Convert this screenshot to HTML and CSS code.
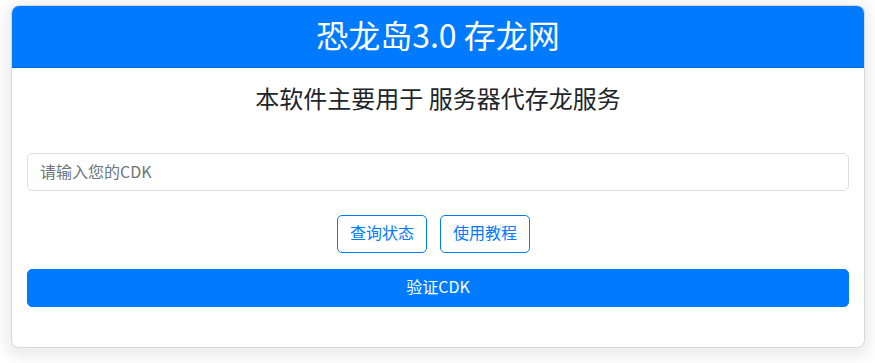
FILE: index.html
```html
<!DOCTYPE html>
<html lang="zh-CN">
<head>
<meta charset="utf-8">
<title>恐龙岛3.0 存龙网</title>
<link rel="stylesheet" href="styles.css">
</head>
<body>
<div class="page">
  <div class="card">
    <div class="card-header">
      <h1 class="title">恐龙岛3.0 存龙网</h1>
    </div>
    <div class="card-body">
      <h4 class="subtitle">本软件主要用于 服务器代存龙服务</h4>
      <input class="form-control" type="text" placeholder="请输入您的CDK">
      <div class="btn-row">
        <button class="btn btn-outline" type="button">查询状态</button>
        <button class="btn btn-outline" type="button">使用教程</button>
      </div>
      <button class="btn btn-primary btn-block" type="button">验证CDK</button>
    </div>
  </div>
</div>
</body>
</html>
```

FILE: styles.css
```css
* { box-sizing: border-box; }
html, body {
  margin: 0;
  padding: 0;
  background: #ffffff;
  font-family: "Noto Sans CJK SC", "Noto Sans", "Liberation Sans", sans-serif;
  color: #212529;
}
.page {
  padding: 5px 10px 16px 11px;
}
.card {
  background: #fff;
  border: 1px solid #d6d8db;
  border-radius: 8px;
  overflow: hidden;
  box-shadow: 0 4px 14px 6px rgba(0, 0, 0, 0.07);
}
.card-header {
  background: #007bff;
  border-bottom: 1px solid #0069d9;
  height: 62px;
  padding-bottom: 5px;
  display: flex;
  align-items: center;
  justify-content: center;
}
.title {
  margin: 0;
  color: #fff;
  font-size: 32px;
  font-weight: 400;
  line-height: 1.2;
}
.card-body {
  padding: 15px 15px 40px;
  display: flex;
  flex-direction: column;
}
.subtitle {
  margin: 0 0 40px;
  text-align: center;
  font-size: 24px;
  font-weight: 400;
  line-height: 30px;
  color: #212529;
}
.form-control {
  display: block;
  width: 100%;
  height: 38px;
  padding: 4px 12px 6px;
  font-family: inherit;
  font-size: 16px;
  color: #495057;
  background: #fff;
  border: 1px solid #dcdfe3;
  border-radius: 5px;
  outline: none;
}
.form-control::placeholder {
  color: #6c757d;
  opacity: 1;
}
.btn-row {
  display: flex;
  justify-content: center;
  gap: 13px;
  margin: 24px 0 16px;
  padding-right: 9px;
}
.btn {
  font-family: inherit;
  font-size: 16px;
  line-height: 22px;
  height: 38px;
  padding: 5px 12px 9px;
  border-radius: 5px;
  cursor: pointer;
}
.btn-outline {
  width: 90px;
  background: #fff;
  color: #007bff;
  border: 1px solid #007bff;
}
.btn-primary {
  background: #007bff;
  color: #fff;
  border: 1px solid #007bff;
}
.btn-block {
  display: block;
  width: 100%;
}
```
